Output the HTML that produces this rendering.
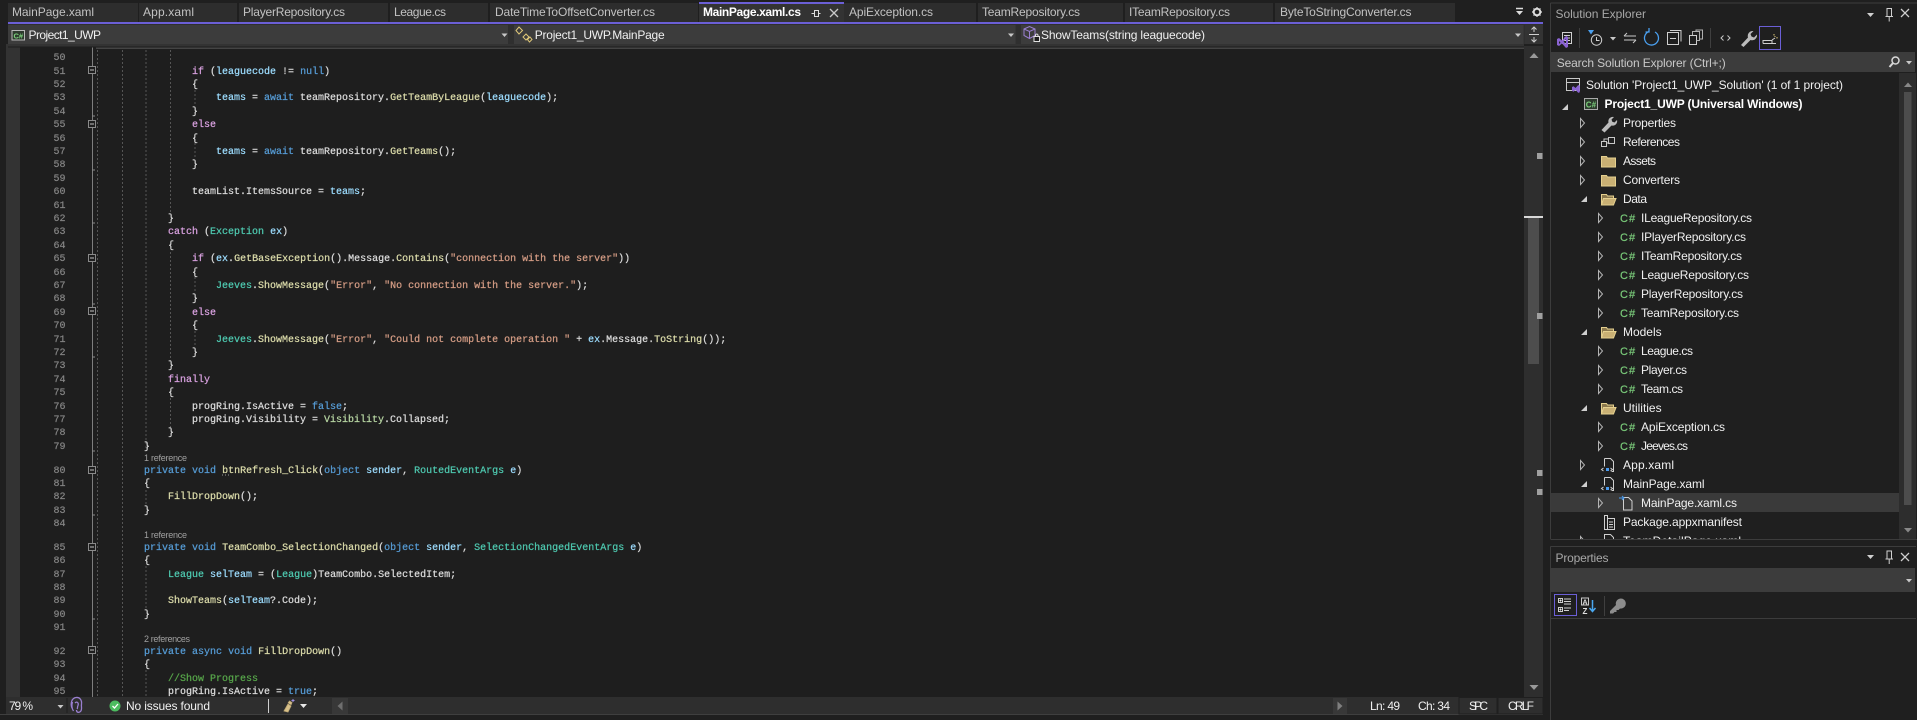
<!DOCTYPE html>
<html lang="en"><head><meta charset="utf-8"><title>Project1_UWP - Visual Studio</title>
<style>
html,body{margin:0;padding:0;background:#1f1f1f;width:1917px;height:720px;overflow:hidden}
svg{display:block;position:absolute;left:0;top:0}
text{white-space:pre}
.m{font:10px "Liberation Mono",monospace;fill:#dcdcdc;stroke:#dcdcdc;stroke-width:.22px}
.n{font:10px "Liberation Mono",monospace;fill:#858585;stroke:#858585;stroke-width:.2px;text-anchor:end}
.u{font:12px "Liberation Sans",sans-serif;fill:#c2c2c2}
.w{font:12px "Liberation Sans",sans-serif;fill:#f0f0f0}
.b{font:bold 12px "Liberation Sans",sans-serif;fill:#fff}
.r{font:9px "Liberation Sans",sans-serif;fill:#a0a0a0}
.cs{font:11px "Liberation Sans",sans-serif;fill:#79c979;stroke:#79c979;stroke-width:.2px;letter-spacing:1px}
.k{fill:#569cd6;stroke:#569cd6}.c{fill:#d8a0df;stroke:#d8a0df}.v{fill:#9cdcfe;stroke:#9cdcfe}.t{fill:#4ec9b0;stroke:#4ec9b0}.f{fill:#dcdcaa;stroke:#dcdcaa}.s{fill:#d69d85;stroke:#d69d85}.g{fill:#57a64a;stroke:#57a64a}.e{fill:#b8d7a3;stroke:#b8d7a3}
.dash{stroke:#555;stroke-width:1;stroke-dasharray:2 2;fill:none}
.ic{fill:none;stroke:#d0d0d0;stroke-width:1}
</style></head><body>
<svg width="1917" height="720" viewBox="0 0 1917 720" xmlns="http://www.w3.org/2000/svg" shape-rendering="auto">
<defs>
<path id="ch" d="M0.5 -4.5L4.5 0L0.5 4.5Z" fill="none" stroke="#b4b4b4"/>
<path id="ex" d="M0 6L6 6L6 0Z" fill="#cfcfcf"/>
<g id="fc"><path d="M0.5 1.5h5l1 1.5h8v9h-14z" fill="#c9b074" stroke="#e5d08f"/></g>
<g id="fo"><path d="M0.5 1.5h5l1 1.5h6v2.5h-10l-2 6.5z" fill="#8a774c" stroke="#e5d08f"/><path d="M2.5 5.5h12.5l-2.5 6.5h-12z" fill="#c9b074" stroke="#e5d08f"/></g>
<g id="fb"><rect x="88.5" y="-3.5" width="7" height="7" fill="#1e1e1e" stroke="#8a8a8a"/><path d="M90 0h4" stroke="#c0c0c0"/></g>
<g id="xa"><path d="M2.5 0.5h6l3 3v10h-2M2.5 0.5v8" fill="none" stroke="#cfcfcf"/><rect x="4" y="10" width="3" height="3" fill="#4a9cf0"/><path d="M2 10l-2 1.5l2 1.5M9 10l2 1.5l-2 1.5" fill="none" stroke="#cfcfcf" transform="translate(-.5 0)"/></g>
</defs>

<!-- editor -->
<rect x="0" y="0" width="1917" height="720" fill="#1f1f1f"/>
<rect x="6" y="44" width="14" height="654" fill="#333"/>
<rect x="20" y="44" width="1504" height="654" fill="#1e1e1e"/>

<!-- guides -->
<path class="dash" d="M97.5 46V697M122.5 46V697M146 46V450M146 490V506M146 566V610M146 670V697M170.5 46V213M170.5 252V361M170.5 398V428M195 90V104M195 143V157M195 277V291M195 331V345"/>
<path d="M92.5 46V697" stroke="#7e7e7e"/>
<path d="M92 116h3M92 170h3M92 304h3M92 357h3M92 451h3M92 515h3M92 619h3M92 223h3" stroke="#8a8a8a"/>
<use href="#fb" y="70"/><use href="#fb" y="124"/><use href="#fb" y="258"/><use href="#fb" y="311"/><use href="#fb" y="470"/><use href="#fb" y="547"/><use href="#fb" y="650"/>

<!-- line numbers -->
<text class="n" x="65.5" y="47">49</text>
<text class="n" x="65.5" y="60">50</text><text class="n" x="65.5" y="74">51</text><text class="n" x="65.5" y="87">52</text><text class="n" x="65.5" y="100">53</text><text class="n" x="65.5" y="114">54</text><text class="n" x="65.5" y="127">55</text><text class="n" x="65.5" y="141">56</text><text class="n" x="65.5" y="154">57</text><text class="n" x="65.5" y="167">58</text><text class="n" x="65.5" y="181">59</text><text class="n" x="65.5" y="194">60</text><text class="n" x="65.5" y="208">61</text><text class="n" x="65.5" y="221">62</text><text class="n" x="65.5" y="234">63</text><text class="n" x="65.5" y="248">64</text><text class="n" x="65.5" y="261">65</text><text class="n" x="65.5" y="275">66</text><text class="n" x="65.5" y="288">67</text><text class="n" x="65.5" y="301">68</text><text class="n" x="65.5" y="315">69</text><text class="n" x="65.5" y="328">70</text><text class="n" x="65.5" y="342">71</text><text class="n" x="65.5" y="355">72</text><text class="n" x="65.5" y="368">73</text><text class="n" x="65.5" y="382">74</text><text class="n" x="65.5" y="395">75</text><text class="n" x="65.5" y="409">76</text><text class="n" x="65.5" y="422">77</text><text class="n" x="65.5" y="435">78</text><text class="n" x="65.5" y="449">79</text><text class="n" x="65.5" y="473">80</text><text class="n" x="65.5" y="486">81</text><text class="n" x="65.5" y="499">82</text><text class="n" x="65.5" y="513">83</text><text class="n" x="65.5" y="526">84</text><text class="n" x="65.5" y="550">85</text><text class="n" x="65.5" y="563">86</text><text class="n" x="65.5" y="577">87</text><text class="n" x="65.5" y="590">88</text><text class="n" x="65.5" y="603">89</text><text class="n" x="65.5" y="617">90</text><text class="n" x="65.5" y="630">91</text><text class="n" x="65.5" y="654">92</text><text class="n" x="65.5" y="667">93</text><text class="n" x="65.5" y="681">94</text><text class="n" x="65.5" y="694">95</text>

<!-- code -->
<text class="m" x="192" y="74"><tspan class="c">if</tspan> (<tspan class="v">leaguecode</tspan> != <tspan class="k">null</tspan>)</text>
<text class="m" x="192" y="87">{</text>
<text class="m" x="216" y="100"><tspan class="v">teams</tspan> = <tspan class="k">await</tspan> teamRepository.<tspan class="f">GetTeamByLeague</tspan>(<tspan class="v">leaguecode</tspan>);</text>
<text class="m" x="192" y="114">}</text>
<text class="m" x="192" y="127"><tspan class="c">else</tspan></text>
<text class="m" x="192" y="141">{</text>
<text class="m" x="216" y="154"><tspan class="v">teams</tspan> = <tspan class="k">await</tspan> teamRepository.<tspan class="f">GetTeams</tspan>();</text>
<text class="m" x="192" y="167">}</text>
<text class="m" x="192" y="194">teamList.ItemsSource = <tspan class="v">teams</tspan>;</text>
<text class="m" x="168" y="221">}</text>
<text class="m" x="168" y="234"><tspan class="c">catch</tspan> (<tspan class="t">Exception</tspan> <tspan class="v">ex</tspan>)</text>
<text class="m" x="168" y="248">{</text>
<text class="m" x="192" y="261"><tspan class="c">if</tspan> (<tspan class="v">ex</tspan>.<tspan class="f">GetBaseException</tspan>().Message.<tspan class="f">Contains</tspan>(<tspan class="s">"connection with the server"</tspan>))</text>
<text class="m" x="192" y="275">{</text>
<text class="m" x="216" y="288"><tspan class="t">Jeeves</tspan>.<tspan class="f">ShowMessage</tspan>(<tspan class="s">"Error"</tspan>, <tspan class="s">"No connection with the server."</tspan>);</text>
<text class="m" x="192" y="301">}</text>
<text class="m" x="192" y="315"><tspan class="c">else</tspan></text>
<text class="m" x="192" y="328">{</text>
<text class="m" x="216" y="342"><tspan class="t">Jeeves</tspan>.<tspan class="f">ShowMessage</tspan>(<tspan class="s">"Error"</tspan>, <tspan class="s">"Could not complete operation "</tspan> + <tspan class="v">ex</tspan>.Message.<tspan class="f">ToString</tspan>());</text>
<text class="m" x="192" y="355">}</text>
<text class="m" x="168" y="368">}</text>
<text class="m" x="168" y="382"><tspan class="c">finally</tspan></text>
<text class="m" x="168" y="395">{</text>
<text class="m" x="192" y="409">progRing.IsActive = <tspan class="k">false</tspan>;</text>
<text class="m" x="192" y="422">progRing.Visibility = <tspan class="e">Visibility</tspan>.Collapsed;</text>
<text class="m" x="168" y="435">}</text>
<text class="m" x="144" y="449">}</text>
<text class="r" x="144" y="461" textLength="43">1 reference</text>
<text class="m" x="144" y="473"><tspan class="k">private</tspan> <tspan class="k">void</tspan> <tspan class="f">btnRefresh_Click</tspan>(<tspan class="k">object</tspan> <tspan class="v">sender</tspan>, <tspan class="t">RoutedEventArgs</tspan> <tspan class="v">e</tspan>)</text>
<path d="M222 475h1M225 475h1M228 475h1" stroke="#999"/>
<text class="m" x="144" y="486">{</text>
<text class="m" x="168" y="499"><tspan class="f">FillDropDown</tspan>();</text>
<text class="m" x="144" y="513">}</text>
<text class="r" x="144" y="538" textLength="43">1 reference</text>
<text class="m" x="144" y="550"><tspan class="k">private</tspan> <tspan class="k">void</tspan> <tspan class="f">TeamCombo_SelectionChanged</tspan>(<tspan class="k">object</tspan> <tspan class="v">sender</tspan>, <tspan class="t">SelectionChangedEventArgs</tspan> <tspan class="v">e</tspan>)</text>
<text class="m" x="144" y="563">{</text>
<text class="m" x="168" y="577"><tspan class="t">League</tspan> <tspan class="v">selTeam</tspan> = (<tspan class="t">League</tspan>)TeamCombo.SelectedItem;</text>
<text class="m" x="168" y="603"><tspan class="f">ShowTeams</tspan>(<tspan class="v">selTeam</tspan>?.Code);</text>
<text class="m" x="144" y="617">}</text>
<text class="r" x="144" y="642" textLength="46">2 references</text>
<text class="m" x="144" y="654"><tspan class="k">private</tspan> <tspan class="k">async</tspan> <tspan class="k">void</tspan> <tspan class="f">FillDropDown</tspan>()</text>
<text class="m" x="144" y="667">{</text>
<text class="m g" x="168" y="681">//Show Progress</text>
<text class="m" x="168" y="694">progRing.IsActive = <tspan class="k">true</tspan>;</text>

<!-- title strip & tabs -->
<rect x="0" y="0" width="1917" height="24" fill="#1f1f1f"/>
<g fill="#2d2d2d">
<rect x="8" y="3" width="130" height="19"/><rect x="139" y="3" width="98" height="19"/><rect x="239" y="3" width="149" height="19"/><rect x="390" y="3" width="98" height="19"/><rect x="490" y="3" width="208" height="19"/><rect x="844" y="3" width="132" height="19"/><rect x="978" y="3" width="145" height="19"/><rect x="1125" y="3" width="148" height="19"/><rect x="1275" y="3" width="180" height="19"/>
</g>
<rect x="699" y="2" width="145" height="20" fill="#333"/>
<rect x="699" y="2" width="145" height="2" fill="#6b5fd6"/>
<rect x="8" y="22" width="1535" height="2" fill="#6b5fd6"/>
<text class="u" x="12" y="16" textLength="82">MainPage.xaml</text>
<text class="u" x="143" y="16" textLength="51">App.xaml</text>
<text class="u" x="243" y="16" textLength="102">PlayerRepository.cs</text>
<text class="u" x="394" y="16" textLength="52">League.cs</text>
<text class="u" x="495" y="16" textLength="160">DateTimeToOffsetConverter.cs</text>
<text class="b" x="703" y="16" textLength="98">MainPage.xaml.cs</text>
<text class="u" x="849" y="16" textLength="84">ApiException.cs</text>
<text class="u" x="982" y="16" textLength="98">TeamRepository.cs</text>
<text class="u" x="1129" y="16" textLength="101">ITeamRepository.cs</text>
<text class="u" x="1280" y="16" textLength="131.5">ByteToStringConverter.cs</text>
<path d="M811.5 13.5h3M814.5 10.5v6h4v-6zM818.5 13.5h2" fill="none" stroke="#e0e0e0"/>
<path d="M830 9l8 8M838 9l-8 8" stroke="#c8c8c8" stroke-width="1.3"/>
<path d="M1516 8.5h7" stroke="#ddd" stroke-width="1.5"/><path d="M1516 11h7l-3.500 4z" fill="#ddd"/>
<circle cx="1537" cy="12" r="3.300" fill="none" stroke="#ddd" stroke-width="2"/><path d="M1537 7v2M1537 15v2M1532 12h2M1540 12h2M1533.500 8.500l1.500 1.500M1539 14l1.500 1.500M1540.500 8.500l-1.500 1.500M1533.500 15.500l1.500-1.500" stroke="#ddd" stroke-width="1.200"/>

<!-- nav bar -->
<rect x="8" y="24" width="1535" height="20" fill="#2f2f2f"/>
<rect x="8" y="25" width="500" height="19" fill="#3c3c3c"/>
<rect x="514" y="25" width="501.500" height="19" fill="#3c3c3c"/>
<rect x="1021" y="25" width="502.500" height="19" fill="#3c3c3c"/>
<rect x="8" y="44" width="1516" height="2.500" fill="#333"/>
<rect x="8" y="46.500" width="1516" height="1" fill="#1e1e1e"/>
<rect x="96" y="47.500" width="1428" height="1.500" fill="#444"/>
<rect x="1525" y="25" width="18" height="19" fill="#333"/>
<rect x="12" y="30.500" width="12.500" height="9.500" fill="#2d3a2d" stroke="#b8b8b8"/>
<text x="13.500" y="38.500" style="font:bold 7.500px 'Liberation Sans',sans-serif;fill:#7fd37f">C#</text>
<text class="w" x="28.500" y="39" textLength="72.500">Project1_UWP</text>
<path d="M501.500 33.500h6l-3 3.500z" fill="#c8c8c8"/>
<path d="M519 27l3.500 3.500l-3.500 3.500l-3-3.500zM526 34l3 3l-3 3l-3-3zM530 37l2 2.500l-2.500 2.500l-2-2.500z" fill="none" stroke="#e0c878"/>
<text class="w" x="534.700" y="39" textLength="130">Project1_UWP.MainPage</text>
<path d="M1008 33.500h6l-3 3.500z" fill="#c8c8c8"/>
<path d="M1024 29l5.500-2.500l5.500 2.500v6.500l-5.500 3l-5.500-3zM1024 29l5.500 2.500l5.500-2.500M1029.500 31.500v7" fill="none" stroke="#9a7fd0"/>
<rect x="1034" y="36.500" width="5.500" height="5" fill="#1e1e1e" stroke="#e0e0e0"/><path d="M1035.500 36.500v-1.500a1.300 1.300 0 0 1 2.500 0v1.500" fill="none" stroke="#e0e0e0"/>
<text class="w" x="1041" y="39" textLength="164">ShowTeams(string leaguecode)</text>
<path d="M1515 33.500h6l-3 3.500z" fill="#c8c8c8"/>
<path d="M1529 34.500h10M1534 27v5M1531.500 29.500l2.500-2.500l2.500 2.500M1534 37v5M1531.500 39.500l2.500 2.500l2.500-2.500" fill="none" stroke="#d0d0d0"/>

<!-- editor scrollbar -->
<rect x="1524" y="46" width="19" height="651" fill="#2e2e2e"/>
<path d="M1529.500 58l4.500-5l4.500 5z" fill="#999"/>
<path d="M1529.500 685l4.500 5l4.500-5z" fill="#999"/>
<rect x="1528" y="217" width="11" height="147" fill="#4d4d4d"/>
<rect x="1524" y="216" width="19" height="2" fill="#d8d8d8"/>
<g fill="#a0a0a0"><rect x="1537" y="153" width="5.500" height="6"/><rect x="1537" y="313" width="5.500" height="6"/><rect x="1537" y="470" width="5.500" height="6"/><rect x="1537" y="489" width="5.500" height="6"/></g>

<!-- status bar -->
<rect x="6" y="697" width="1537" height="17" fill="#2e2e2e"/>
<rect x="0" y="714" width="1543" height="1" fill="#3f3f3f"/>
<rect x="0" y="715" width="1550" height="5" fill="#1f1f1f"/>
<text class="w" x="9" y="710" textLength="24">79 %</text>
<path d="M57.500 705h6l-3 3.500z" fill="#c8c8c8"/>
<path d="M67 698v15" stroke="#1e1e1e"/>
<path d="M72 708c-2-5 0-10 4-10.500c4-.5 6 3 5.500 6.500c-.5 3 1 5-1 7.500c-2 1.500-4 1-4-1.500M75 703c2-2 4 0 3 2.500c-1 1.500 0 2.500-1 3.500M72.500 702c-1 3-1 6 1 9" fill="none" stroke="#9a7fd0" stroke-width="1.300"/>
<circle cx="115" cy="706" r="5.500" fill="#4cbb5f"/><path d="M112.500 706l2 2l3.500-4" fill="none" stroke="#fff" stroke-width="1.300"/>
<text class="w" x="126" y="710" textLength="84">No issues found</text>
<path d="M268.500 699v14" stroke="#cfcfcf"/>
<path d="M284 711l4-7l3 2l-3 6zM288 703l1.500-2l2.500 1.500l-1 2.500" fill="#d8c18a" stroke="#bfa874" stroke-width=".8"/><path d="M293 699v3M291.500 700.500h3" stroke="#a090e0"/>
<path d="M300 704h7l-3.500 4z" fill="#e8e8e8"/>
<rect x="332" y="698" width="16" height="16" fill="#383838"/><path d="M342.500 701.500v9l-5-4.500z" fill="#6f6f6f"/>
<rect x="1333" y="698" width="14" height="16" fill="#383838"/><path d="M1337.500 701.500v9l5-4.500z" fill="#7f7f7f"/>
<text class="w" x="1370" y="710" textLength="30">Ln: 49</text>
<text class="w" x="1418" y="710" textLength="32">Ch: 34</text>
<rect x="1459" y="697.500" width="38" height="16.500" fill="#2e2e2e" stroke="#1f1f1f"/>
<rect x="1498" y="697.500" width="45" height="16.500" fill="#2e2e2e" stroke="#1f1f1f"/>
<text class="w" x="1469" y="710" textLength="19">SPC</text>
<text class="w" x="1508" y="710" textLength="26">CRLF</text>

<!-- solution explorer -->
<rect x="1550" y="2" width="367" height="537" fill="#1f1f1f"/>
<path d="M1550.500 3V540M1550.500 3H1917" stroke="#3c3c3c"/>
<text class="u" x="1555.500" y="18" textLength="90.500" style="fill:#a8a8a8">Solution Explorer</text>
<path d="M1867 13h7l-3.500 4z" fill="#d0d0d0"/>
<path d="M1887 8.500h4.500v8h-4.500zM1885.500 16.500h7.500M1889.200 16.500v5" fill="none" stroke="#d0d0d0"/>
<path d="M1901 9l8 8M1909 9l-8 8" stroke="#d0d0d0" stroke-width="1.300"/>

<!-- SE toolbar -->
<rect x="1562.500" y="32.500" width="9" height="11" fill="#1f1f1f" stroke="#d0d0d0"/><path d="M1564 35.500h6M1564 38h6M1564 40.500h6" stroke="#d0d0d0"/>
<path d="M1557 39l2-1l3 2.500l4-4.500l2 1v10l-2 1l-4-4.500l-3 2.500l-2-1zM1559 41v3l1.500-1.500zM1566 39v5l-2.500-2.500z" fill="#8a63d2" fill-rule="evenodd"/>
<path d="M1579.500 28v20" stroke="#3f3f3f"/>
<path d="M1588 30h6l-3 4.500z" fill="#4aa0f0"/>
<circle cx="1596.500" cy="40" r="5.200" fill="none" stroke="#cfcfcf"/><path d="M1596.500 37v3.500h3" fill="none" stroke="#cfcfcf"/>
<path d="M1610 37h6l-3 3.500z" fill="#c8c8c8"/>
<path d="M1624 36h12M1627 33l-3 3M1624 40h12M1633 43l3-3" fill="none" stroke="#c8c8c8"/>
<path d="M1649 31.500a7 7 0 1 0 6 0.500M1649 28v4h-3.500" fill="none" stroke="#4aa0f0" stroke-width="1.300"/>
<rect x="1667.500" y="32.500" width="11" height="12" fill="#1f1f1f" stroke="#d0d0d0"/><path d="M1670 30.500h11v11M1670 38.500h6" fill="none" stroke="#d0d0d0"/>
<rect x="1689.500" y="35.500" width="7" height="9" fill="#1f1f1f" stroke="#d0d0d0"/><path d="M1692.500 35v-3.500h7v9h-3M1696 31.500v-1.500h6.500v9h-3" fill="none" stroke="#b0b0b0"/>
<path d="M1710.500 28v20" stroke="#3f3f3f"/>
<path d="M1723.500 35.500l-2.500 2.500l2.500 2.500M1727.500 35.500l2.500 2.500l-2.500 2.500" fill="none" stroke="#c8c8c8"/>
<path d="M1741 45l7-7.500a5 5 0 0 1 5.500-6.500l-3 3l1 2.500l2.500 1l3-3a5 5 0 0 1-6.500 5.500l-7 7z" fill="#bcbcbc"/>
<rect x="1759.500" y="26.500" width="21" height="23" fill="none" stroke="#6b5fd6"/>
<path d="M1763 43.500h13M1763 43.500v-3h9v3M1772 40l3-2" fill="none" stroke="#d0d0d0"/><path d="M1774 34v1.500M1777 37v1.500M1774.500 36.500h1" stroke="#e0c878"/>

<!-- search -->
<rect x="1551" y="52" width="364" height="20" fill="#3c3c3c"/>
<text class="u" x="1556.700" y="67" textLength="169" style="fill:#c8c8c8">Search Solution Explorer (Ctrl+;)</text>
<circle cx="1895.500" cy="60.500" r="3.500" fill="none" stroke="#d8d8d8" stroke-width="1.500"/><path d="M1893 63l-3.500 4" stroke="#d8d8d8" stroke-width="2"/>
<path d="M1906 61h6l-3 3.500z" fill="#c8c8c8"/>

<!-- tree scrollbar -->
<rect x="1899" y="73" width="17" height="466" fill="#2d2d2d"/>
<path d="M1904 87l4-4.500l4 4.500z" fill="#888"/>
<path d="M1904 528l4 4.500l4-4.500z" fill="#888"/>
<rect x="1904" y="92" width="7.500" height="413" fill="#4d4d4d"/>

<rect x="1551" y="493" width="348" height="19" fill="#3a3a3a"/>

<!-- tree content -->
<rect x="1566.500" y="78.500" width="13" height="12" fill="none" stroke="#c8c8c8"/><path d="M1566.500 82.500h13" stroke="#c8c8c8"/>
<path d="M1572 87l1.500-.8l2 1.800l2.800-3l1.500.7v6.500l-1.500.7l-2.800-3l-2 1.800l-1.500-.8z" fill="#8a63d2"/>
<text class="w" x="1586" y="89" textLength="257">Solution 'Project1_UWP_Solution' (1 of 1 project)</text>

<use href="#ex" x="1562" y="104"/>
<rect x="1584.500" y="98.500" width="13" height="11" fill="#2d3a2d" stroke="#aaa"/>
<text x="1585.800" y="107.500" style="font:bold 8px 'Liberation Sans',sans-serif;fill:#7fd37f">C#</text>
<text class="b" x="1604.500" y="108" textLength="198">Project1_UWP (Universal Windows)</text>

<use href="#ch" x="1580" y="123"/>
<path d="M1601.500 130l7-7.500a4.500 4.500 0 0 1 5.500-5.500l-2.500 2.500l.8 2.200l2.200.8l2.500-2.500a4.500 4.500 0 0 1-5.500 5.500l-7 7z" fill="#bcbcbc"/>
<text class="w" x="1623" y="127" textLength="53">Properties</text>

<use href="#ch" x="1580" y="142"/>
<path d="M1601.500 141.500h5v5h-5zM1608.500 137.500h6v6h-6zM1606.500 143h3M1604 141v-2h4" fill="none" stroke="#c8c8c8"/>
<text class="w" x="1623" y="146" textLength="57">References</text>

<use href="#ch" x="1580" y="161"/><use href="#fc" x="1601" y="155"/>
<text class="w" x="1623" y="165" textLength="33">Assets</text>
<use href="#ch" x="1580" y="180"/><use href="#fc" x="1601" y="174"/>
<text class="w" x="1623" y="184" textLength="57">Converters</text>
<use href="#ex" x="1581" y="196"/><use href="#fo" x="1601" y="193"/>
<text class="w" x="1623" y="203" textLength="24">Data</text>

<use href="#ch" x="1598" y="218"/><text class="cs" x="1620" y="222">C#</text><text class="w" x="1641" y="222" textLength="111">ILeagueRepository.cs</text>
<use href="#ch" x="1598" y="237"/><text class="cs" x="1620" y="241">C#</text><text class="w" x="1641" y="241" textLength="105">IPlayerRepository.cs</text>
<use href="#ch" x="1598" y="256"/><text class="cs" x="1620" y="260">C#</text><text class="w" x="1641" y="260" textLength="101">ITeamRepository.cs</text>
<use href="#ch" x="1598" y="275"/><text class="cs" x="1620" y="279">C#</text><text class="w" x="1641" y="279" textLength="108">LeagueRepository.cs</text>
<use href="#ch" x="1598" y="294"/><text class="cs" x="1620" y="298">C#</text><text class="w" x="1641" y="298" textLength="102">PlayerRepository.cs</text>
<use href="#ch" x="1598" y="313"/><text class="cs" x="1620" y="317">C#</text><text class="w" x="1641" y="317" textLength="98">TeamRepository.cs</text>

<use href="#ex" x="1581" y="329"/><use href="#fo" x="1601" y="326"/>
<text class="w" x="1623" y="336" textLength="38.600">Models</text>
<use href="#ch" x="1598" y="351"/><text class="cs" x="1620" y="355">C#</text><text class="w" x="1641" y="355" textLength="52">League.cs</text>
<use href="#ch" x="1598" y="370"/><text class="cs" x="1620" y="374">C#</text><text class="w" x="1641" y="374" textLength="46">Player.cs</text>
<use href="#ch" x="1598" y="389"/><text class="cs" x="1620" y="393">C#</text><text class="w" x="1641" y="393" textLength="42">Team.cs</text>

<use href="#ex" x="1581" y="405"/><use href="#fo" x="1601" y="402"/>
<text class="w" x="1623" y="412" textLength="38.600">Utilities</text>
<use href="#ch" x="1598" y="427"/><text class="cs" x="1620" y="431">C#</text><text class="w" x="1641" y="431" textLength="84">ApiException.cs</text>
<use href="#ch" x="1598" y="446"/><text class="cs" x="1620" y="450">C#</text><text class="w" x="1641" y="450" textLength="47">Jeeves.cs</text>

<use href="#ch" x="1580" y="465"/><use href="#xa" x="1602" y="458"/>
<text class="w" x="1623" y="469" textLength="51">App.xaml</text>
<use href="#ex" x="1581" y="481"/><use href="#xa" x="1602" y="477"/>
<text class="w" x="1623" y="488" textLength="81.500">MainPage.xaml</text>
<use href="#ch" x="1598" y="503"/>
<path d="M1623.500 497.500h5l3.500 3.500v9h-8.500z" fill="none" stroke="#d0d0d0"/><path d="M1619 498h5M1622 496l2 2l-2 2" fill="none" stroke="#4a9cf0"/>
<text class="w" x="1641" y="507" textLength="96">MainPage.xaml.cs</text>
<path d="M1604.500 515.500h3v14h-3zM1607.500 518.500h7v11h-7M1609 522h4M1609 524.500h4M1609 527h4" fill="none" stroke="#d0d0d0"/>
<text class="w" x="1623" y="526" textLength="119">Package.appxmanifest</text>
<use href="#ch" x="1580" y="541"/><path d="M1604.500 534.500h6l3 3v8h-9z" fill="none" stroke="#d0d0d0"/>
<text class="w" x="1623" y="545" textLength="118">TeamDetailPage.xaml</text>

<rect x="1550" y="539" width="367" height="181" fill="#1f1f1f"/>
<path d="M1550.500 539.500H1917" stroke="#3c3c3c"/>

<!-- properties -->
<path d="M1550.500 546.500H1917M1550.500 546.500V720" stroke="#3c3c3c"/>
<text class="u" x="1555.500" y="562" textLength="53" style="fill:#a8a8a8">Properties</text>
<path d="M1867 555h7l-3.500 4z" fill="#d0d0d0"/>
<path d="M1887 551h4.500v8h-4.500zM1885.500 559h7.500M1889.200 559v5" fill="none" stroke="#d0d0d0"/>
<path d="M1901 553l8 8M1909 553l-8 8" stroke="#d0d0d0" stroke-width="1.300"/>
<rect x="1551" y="568" width="364" height="24" fill="#3c3c3c"/>
<path d="M1906 579h6l-3 3.500z" fill="#c8c8c8"/>
<rect x="1554.500" y="594.500" width="22" height="21" fill="none" stroke="#6b5fd6"/>
<path d="M1558.500 598.500h4v4h-4zM1558.500 607.500h4v4h-4zM1564 599h7M1564 601.500h7M1564 604h7M1564 608h7M1564 610.500h5" fill="none" stroke="#d0d0d0"/>
<path d="M1559.500 600.500h2M1560.500 599.500v2M1559.500 609.500h2M1560.500 608.500v2" stroke="#e8e8e8"/>
<rect x="1581.500" y="598" width="7" height="7" fill="none" stroke="#c8c8c8"/>
<text x="1582.500" y="604.500" style="font:bold 7px 'Liberation Sans',sans-serif;fill:#e0e0e0">A</text>
<text x="1582.500" y="614" style="font:bold 8px 'Liberation Sans',sans-serif;fill:#e0e0e0">Z</text>
<path d="M1592.500 600v11M1589.500 608l3 3.500l3-3.500" fill="none" stroke="#4aa8f0" stroke-width="1.500"/>
<path d="M1604.500 596v20" stroke="#3f3f3f"/>
<path d="M1610 611l6-6a5 5 0 1 1 4 3.500l-1.500 1.500h-2v2h-2l-1.500 1.500h-3z" fill="#8c8c8c"/>
<path d="M1551 618.500H1917" stroke="#3c3c3c"/>
<path d="M1916.500 546V720" stroke="#1f1f1f"/>
</svg>
</body></html>
